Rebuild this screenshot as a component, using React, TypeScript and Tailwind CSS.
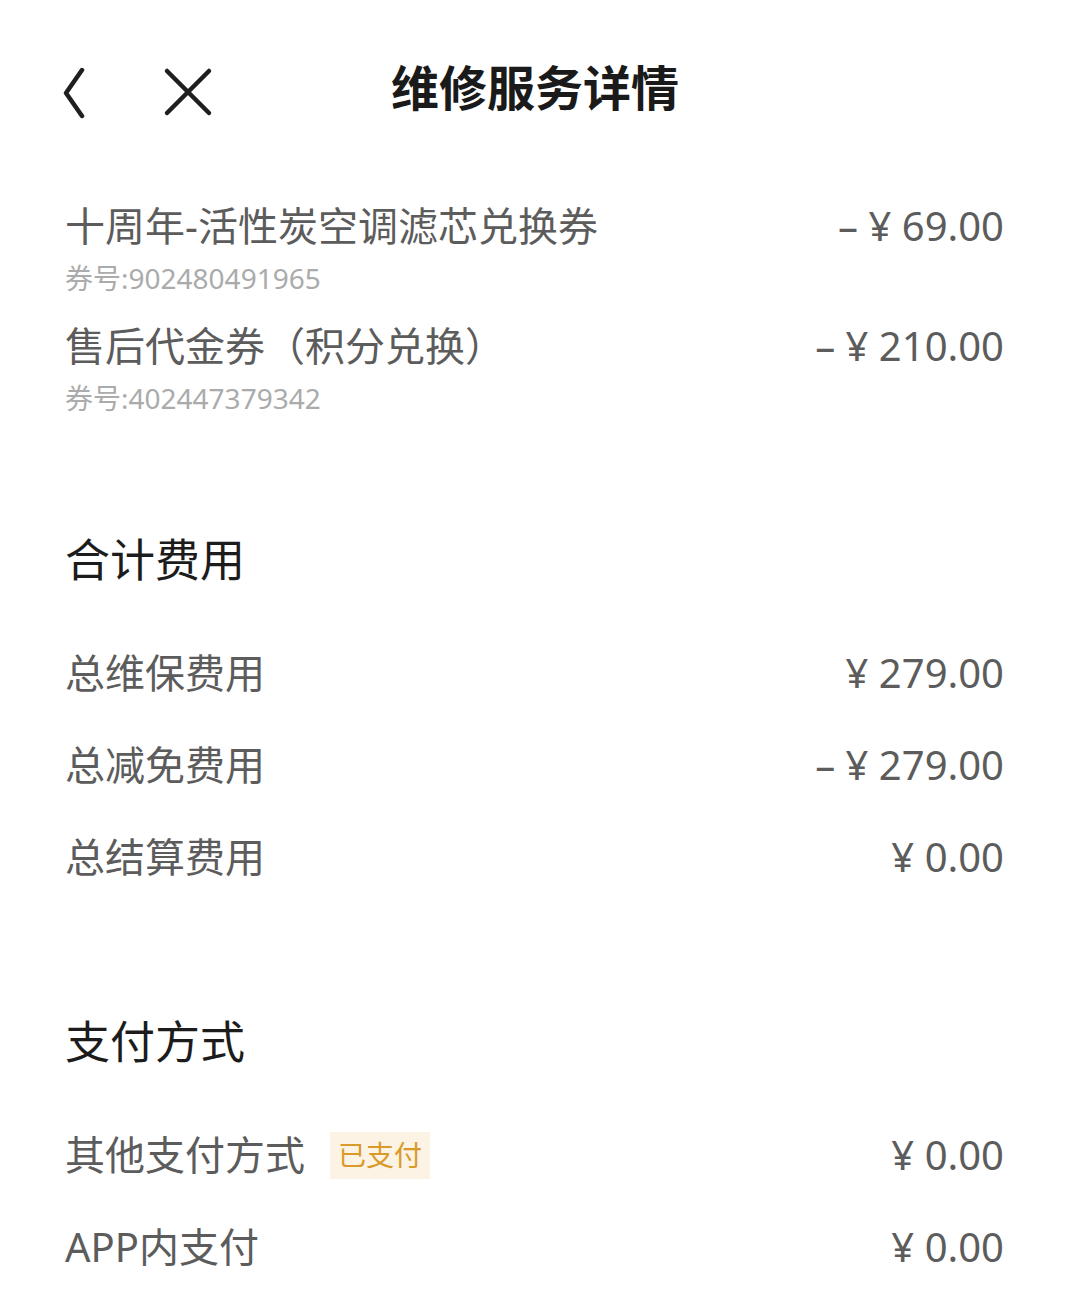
import React from "react";

const font = { fontFamily: '"Noto Sans", "Noto Sans CJK SC", sans-serif' };

const coupons = [
  { name: "十周年-活性炭空调滤芯兑换券", code: "902480491965", amount: "– ¥ 69.00" },
  { name: "售后代金券（积分兑换）", code: "402447379342", amount: "– ¥ 210.00" },
];

const totals = [
  { label: "总维保费用", amount: "¥ 279.00" },
  { label: "总减免费用", amount: "– ¥ 279.00" },
  { label: "总结算费用", amount: "¥ 0.00" },
];

const Row = ({ label, amount, badge }: { label: string; amount: string; badge?: string }) => (
  <div className="h-[92px] flex items-center justify-between">
    <div className="flex items-center">
      <span className="text-[40px] leading-none text-[#5c5c5c]">{label}</span>
      {badge && (
        <span className="ml-[25px] h-[47px] px-[8px] flex items-center bg-[#fdf3e4] text-[#d99a2a] text-[28px] leading-none">
          {badge}
        </span>
      )}
    </div>
    <span className="text-[40px] leading-none text-[#5c5c5c]">{amount}</span>
  </div>
);

export default function App() {
  return (
    <div className="w-[1075px] min-h-[1310px] bg-white pl-[65px] pr-[71px]" style={font}>
      {/* header */}
      <div className="relative h-[176px] flex items-center">
        <svg width="28" height="52" viewBox="0 0 28 52" className="-ml-[6px] mt-[10px]">
          <path d="M23 3 L7 26 L23 49" fill="none" stroke="#1f1f1f" strokeWidth="4.5" strokeLinecap="round" strokeLinejoin="round" />
        </svg>
        <svg width="50" height="50" viewBox="0 0 50 50" className="ml-[76px] mt-[8px]">
          <path d="M4 4 L46 46 M46 4 L4 46" fill="none" stroke="#1f1f1f" strokeWidth="4.5" strokeLinecap="round" />
        </svg>
        <h1 className="absolute left-[320px] w-[300px] text-center text-[48px] font-bold leading-none text-[#1a1a1a]">
          维修服务详情
        </h1>
      </div>

      {/* coupons */}
      <div className="pt-[24px] flex flex-col gap-[24px]">
        {coupons.map((c) => (
          <div key={c.code}>
            <div className="h-[52px] flex items-center justify-between">
              <span className="text-[40px] leading-none text-[#5c5c5c]">{c.name}</span>
              <span className="text-[40px] leading-none text-[#5c5c5c]">{c.amount}</span>
            </div>
            <div className="mt-[8px] h-[36px] flex items-center text-[28px] leading-none text-[#ababab]">
              券号:{c.code}
            </div>
          </div>
        ))}
      </div>

      {/* totals */}
      <div className="mt-[113px] h-[60px] flex items-center text-[45px] leading-none text-[#1c1c1c]">合计费用</div>
      <div className="mt-[38px]">
        {totals.map((t) => (
          <Row key={t.label} label={t.label} amount={t.amount} />
        ))}
      </div>

      {/* payment */}
      <div className="mt-[108px] h-[60px] flex items-center text-[45px] leading-none text-[#1c1c1c]">支付方式</div>
      <div className="mt-[38px]">
        <Row label="其他支付方式" amount="¥ 0.00" badge="已支付" />
        <Row label="APP内支付" amount="¥ 0.00" />
      </div>
    </div>
  );
}
